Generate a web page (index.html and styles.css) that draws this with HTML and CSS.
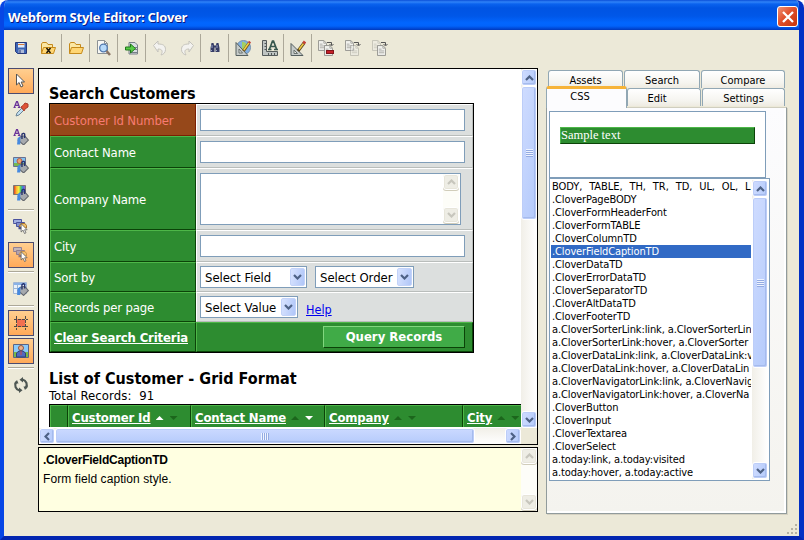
FILE: index.html
```html
<!DOCTYPE html>
<html lang="en">
<head>
<meta charset="utf-8">
<title>Webform Style Editor: Clover</title>
<link rel="stylesheet" href="styles.css">
</head>
<body>
<svg width="0" height="0" class="defs">
  <defs>
    <symbol id="up" viewBox="0 0 9 6"><path d="M1 5 4.5 1.5 8 5" fill="none" stroke="currentColor" stroke-width="2.2"/></symbol>
    <symbol id="down" viewBox="0 0 9 6"><path d="M1 1 4.5 4.5 8 1" fill="none" stroke="currentColor" stroke-width="2.2"/></symbol>
    <symbol id="left" viewBox="0 0 6 9"><path d="M5 1 1.5 4.5 5 8" fill="none" stroke="currentColor" stroke-width="2.2"/></symbol>
    <symbol id="right" viewBox="0 0 6 9"><path d="M1 1 4.5 4.5 1 8" fill="none" stroke="currentColor" stroke-width="2.2"/></symbol>
    <symbol id="folder" viewBox="0 0 16 16"><path d="M1.5 13.500V4l1-1.500h4L8 4.500h4.500V7" fill="#fbe7a4" stroke="#c58a1c"/><path d="M1.500 13.500 3.500 7.500h12l-2 6z" fill="#ffd674" stroke="#c58a1c" stroke-linejoin="round"/></symbol>
    <symbol id="cursor" viewBox="0 0 12 16"><path d="M1.500 1v11l2.600-2.500L6 14l2-1-1.900-4H9.500z" fill="#fff" stroke="#555" stroke-linejoin="round"/></symbol>
    <symbol id="page" viewBox="0 0 10 12"><path d="M.5.500h6l3 3v8h-9z" fill="#f1f1ed" stroke="#8d8d89"/><path d="M6.500.500v3h3M2 4.500h3M2 6.500h6M2 8.500h6" fill="none" stroke="#a7a7a3"/></symbol>
    <symbol id="bucket" viewBox="0 0 12 12"><path d="m4 4 4-1 3.500 4-4.500 4.500-5-4.500z" fill="#a6a9ad" stroke="#65686d"/><path d="M1 11 1.500 5l2.500-1.500V11z" fill="#4689df"/><path d="M5.500 6V1.500l1.500-1 1 1V5" fill="none" stroke="#27336e" stroke-width="1.300"/></symbol>
    <symbol id="letter" viewBox="0 0 9 8"><path d="M.5 7.500h2.500M5.500 7.500H8.500M1.500 7 4 .800h1L7.200 7M2.800 5h3.200" fill="none" stroke="#6a3399" stroke-width="1.500"/></symbol>
    <symbol id="stack" viewBox="0 0 16 16"><path d="M.5 3.500V.500h8v4h-8z" fill="#9faee0" stroke="#4a529d"/><path d="M3.500 3.500h8v4h-8z" fill="#8190cf" stroke="#4a529d"/><path d="M6.500 6.500 8 4.500h4l1.500 2V9h-7z" fill="#f3c064" stroke="#a67530"/><path d="M5.500 9h4" stroke="#444b8e" stroke-width="2.500"/></symbol>
  </defs>
</svg>
<div class="window">
  <header class="titlebar">
    <h1>Webform Style Editor: Clover</h1>
    <button class="close"><svg width="20" height="20" viewBox="0 0 20 20"><path d="m5 5 10 10M15 5 5 15" stroke="#fff" stroke-width="2.300"/></svg></button>
  </header>

  <nav class="toolbar">
    <span class="tool"><svg class="i" width="12" height="12" viewBox="0 0 12 12"><path d="M.5.500h11v11h-9l-2-2z" fill="#3c64b5" stroke="#26387b"/><path d="M3 1h6.500v4.500H3z" fill="#dfe9f7"/><path d="M3 2.500h6.500" stroke="#d77a3a"/><path d="M3.500 7.500h5.500V11H3.500z" fill="#aebbd7"/><path d="M5 8v3" stroke="#26387b"/></svg></span>
    <span class="tool"><svg width="16" height="16"><use href="#folder"/><path d="m6.500 8 4 5M10.500 8l-4 5" stroke="#1d1608" stroke-width="1.500"/></svg></span>
    <i class="sep"></i>
    <span class="tool"><svg width="16" height="16"><use href="#folder"/></svg></span>
    <i class="sep"></i>
    <span class="tool"><svg class="i" width="16" height="18" viewBox="0 0 16 18"><path d="M1.500 1.500h7l3 3v10h-10z" fill="#f8f8f4" stroke="#8d9295"/><path d="M8.500 1.500v3h3" fill="none" stroke="#8d9295"/><circle cx="7.500" cy="9" r="3.800" fill="#b7dafa" stroke="#5279ae" stroke-width="1.300"/><path d="m10.500 12 3.500 4" stroke="#8a7464" stroke-width="2.500"/></svg></span>
    <i class="sep"></i>
    <span class="tool"><svg width="16" height="16" viewBox="0 0 16 16"><path d="M5 2.500h6l2.500 2.500v9H5z" fill="#d9dde2" stroke="#788087"/><path d="M11 7.500h2M11 9.500h2M7 12.500h6" stroke="#788087"/><path d="M1.500 7h5V4l5 4.500-5 4.500v-3h-5z" fill="#59cc46" stroke="#21761c"/></svg></span>
    <i class="sep"></i>
    <span class="tool"><svg width="16" height="16" viewBox="0 0 16 16"><path id="undo" d="M1.500 5.500 6 1v3c5 0 7.500 1.500 7.500 5.500 0 3-2 5-4.500 5.500 2-3.500 1.500-6-3-6v3z" fill="#f3f2ef" stroke="#c5c3bc"/></svg></span>
    <span class="tool"><svg width="16" height="16" viewBox="0 0 16 16"><use href="#undo" transform="matrix(-1 0 0 1 16 0)"/></svg></span>
    <i class="sep"></i>
    <span class="tool"><svg class="i" width="10" height="11" viewBox="0 0 10 11"><path d="M1.500 1h2L4.500 5v5h-4V6zM6.500 1h2l1 5v4h-4V5z" fill="#363c66"/><path d="M4 4.500h2" stroke="#363c66" stroke-width="2"/><path d="M2 3v3M7 3v3M1.500 8v1M6.500 8v1" stroke="#99a4c9"/></svg></span>
    <i class="sep"></i>
    <span class="tool"><svg width="16" height="16" viewBox="0 0 16 16"><circle cx="8.500" cy="7.500" r="7" fill="#80afe3" stroke="#7590ac"/><path d="M7 1.500 11 3l1 6-5 2z" fill="#a2cf65"/><path d="M1 2.500V15.500h12z" fill="#c6cbc9" stroke="#555f5f"/><path d="M4 9v4h3.500z" fill="#e4e7e4" stroke="#68706e"/><path d="m8.500 11 5.500-8" stroke="#735420" stroke-width="3"/><path d="m8.800 10 5-7" stroke="#f1cf42" stroke-width="1.500"/><path d="m14 3 1-1.500" stroke="#c13b34" stroke-width="2.500"/></svg></span>
    <span class="tool"><svg width="16" height="16" viewBox="0 0 16 16"><path d="M.5.500h4v11h11v4H.500z" fill="#bfc4c2" stroke="#545a5a"/><path d="M2.500 3.500h2M2.500 6.500h2M2.500 9.500h2M6.500 13v2M9.500 13v2M12.500 13v2" stroke="#545a5a"/><path d="M6 9.500h3.500M12 9.500h4M7.500 9 10.500 1h1L14.500 9M8.500 6.500h4.500" fill="none" stroke="#38584e" stroke-width="1.700"/></svg></span>
    <i class="sep"></i>
    <span class="tool"><svg width="16" height="16" viewBox="0 0 16 16"><path d="M1 3.500v12h12z" fill="#c6cbc9" stroke="#555f5f"/><path d="M4 10v3.500h3.500z" fill="#eceae0" stroke="#68706e"/><path d="m8 11 6-8" stroke="#59451e" stroke-width="3"/><path d="m9 9.500 4.500-6" stroke="#edca45" stroke-width="1.500"/><path d="M13.500 3.500 15 1.500" stroke="#c54238" stroke-width="3"/></svg></span>
    <i class="sep"></i>
    <span class="tool"><svg width="16" height="16"><use href="#page" width="9" height="11"/><use href="#page" x="6" y="5" width="9" height="11"/><path d="M9 2.500h4.500V5M11.500 4l2 2 2-2" fill="none" stroke="#555"/><rect x="8.500" y="10.500" width="7" height="3" fill="#c51f27" stroke="#82151b"/></svg></span>
    <span class="tool"><svg width="16" height="16"><use href="#page" width="9" height="11"/><g opacity=".5"><use href="#page" x="5" y="5" width="9" height="11"/></g><path d="M9 2.500h4.500V5M11.500 4l2 2 2-2" fill="none" stroke="#555"/></svg></span>
    <span class="tool"><svg width="16" height="16"><g opacity=".45"><use href="#page" width="9" height="11"/></g><use href="#page" x="5" y="5" width="9" height="11"/><path d="M9 2.500h4.500V5M11.500 4l2 2 2-2" fill="none" stroke="#555"/></svg></span>
  </nav>

  <main class="content">
    <nav class="side">
      <span class="btn on"><svg width="12" height="16"><use href="#cursor"/></svg></span>
      <span class="btn"><svg width="16" height="16"><use href="#letter" width="8" height="7"/><path d="m3 15 1-3 5-5 2 2-5 5z" fill="#c3dff0" stroke="#6c8597"/><path d="m8 6 2-1.500 2-2.500 3 1v3l-3 2-1 2z" fill="#df5233" stroke="#a83c2b"/></svg></span>
      <span class="btn"><svg width="16" height="16"><use href="#letter" width="8" height="7"/><use href="#bucket" x="3" y="3.500" width="13" height="13"/></svg></span>
      <span class="btn"><svg width="16" height="16"><path d="M.5.500h12v9H.500z" fill="#7fc2f1" stroke="#6b7190"/><path d="M1 6h11v3H1z" fill="#78b84e"/><circle cx="6.500" cy="4" r="2.500" fill="#e9a473" stroke="#ba5944"/><use href="#bucket" x="3" y="3.500" width="13" height="13"/></svg></span>
      <span class="btn"><svg width="16" height="16"><path d="M.500.500h12v9H.500z" fill="url(#rainbow)" stroke="#777"/><linearGradient id="rainbow"><stop stop-color="#d32929"/><stop offset=".25" stop-color="#ffb72e"/><stop offset=".45" stop-color="#f4f54c"/><stop offset=".6" stop-color="#47ca64"/><stop offset=".8" stop-color="#3f76e6"/><stop offset="1" stop-color="#c34dc5"/></linearGradient><use href="#bucket" x="3" y="3.500" width="13" height="13"/></svg></span>
      <i class="rule"></i>
      <span class="btn"><svg width="16" height="16"><use href="#stack" width="16" height="16"/><use href="#cursor" x="7" y="3.500" width="9" height="13"/></svg></span>
      <span class="btn on"><svg width="16" height="16"><use href="#stack" width="16" height="16" opacity=".6"/><use href="#cursor" x="7" y="3.500" width="9" height="13"/></svg></span>
      <i class="rule"></i>
      <span class="btn"><svg width="16" height="16"><path d="M.500 1.500h13v11H.500z" fill="#e9f1fb" stroke="#a2b7d4"/><path d="M1 3h12" stroke="#8ab2e7" stroke-width="2"/><path d="M1 7.500h12M4.500 4v8" stroke="#9db8d7"/><use href="#bucket" x="3" y="2" width="13" height="13"/></svg></span>
      <i class="rule"></i>
      <span class="btn on"><svg width="14" height="14" viewBox="0 0 14 14"><path d="M3 3h8v8H3z" fill="#f36f50"/><path d="M0 3.500h14M0 10.500h14M2.500 0v14M11.500 0v14" stroke="#4d4a48" stroke-dasharray="3 1"/></svg></span>
      <span class="btn on"><svg width="16" height="14" viewBox="0 0 16 14"><path d="M.500.500h15v13H.500z" fill="#8acafa" stroke="#596586"/><path d="M1 8h14v5H1z" fill="#75b94b"/><circle cx="8" cy="4" r="2.500" fill="#ecb18b" stroke="#8c5643"/><path d="M3.500 13V9L6 7h4l2.500 2v4z" fill="#5268bd" stroke="#32417a"/><path d="M8 7v4" stroke="#cf4648"/></svg></span>
      <i class="rule"></i>
      <span class="btn"><svg width="16" height="16" viewBox="0 0 16 16"><path d="M9.500 2.500A5.500 5.500 0 0 1 12.800 11M6.500 13.500A5.500 5.500 0 0 1 3.200 5" fill="none" stroke="#4d5652" stroke-width="2.200"/><path d="M10 0v5.500L6.500 2.700zM6 16v-5.500l3.500 2.800zM10.500 9.500h4.500L12 13zM5.500 6.500H1L4 3z" fill="#4d5652"/></svg></span>
    </nav>

    <section class="center">
      <div class="preview">
        <div class="page">
          <h2>Search Customers</h2>
          <div class="form">
            <div class="row"><div class="cap picked">Customer Id Number</div><div class="val"><span class="input"></span></div></div>
            <div class="row"><div class="cap">Contact Name</div><div class="val"><span class="input"></span></div></div>
            <div class="row tall"><div class="cap">Company Name</div><div class="val"><div class="textarea"><div class="vbar off"><b><svg width="9" height="6"><use href="#up"/></svg></b><b class="end"><svg width="9" height="6"><use href="#down"/></svg></b></div></div></div></div>
            <div class="row"><div class="cap">City</div><div class="val"><span class="input"></span></div></div>
            <div class="row short"><div class="cap">Sort by</div><div class="val"><span class="select field">Select Field<b><svg width="9" height="6"><use href="#down"/></svg></b></span><span class="select order">Select Order<b><svg width="9" height="6"><use href="#down"/></svg></b></span></div></div>
            <div class="row short"><div class="cap">Records per page</div><div class="val"><span class="select value">Select Value<b><svg width="9" height="6"><use href="#down"/></svg></b></span><a class="help">Help</a></div></div>
            <div class="row short"><div class="cap"><a class="clear">Clear Search Criteria</a></div><div class="val foot"><span class="query">Query Records</span></div></div>
          </div>
          <h2 class="list-title">List of Customer - Grid Format</h2>
          <div class="total">Total Records:&nbsp; 91</div>
          <div class="grid">
            <div class="th g0"></div>
            <div class="th g1"><a>Customer Id</a><i class="asc lit"></i><i class="desc"></i></div>
            <div class="th g2"><a>Contact Name</a><i class="asc"></i><i class="desc lit"></i></div>
            <div class="th g3"><a>Company</a><i class="asc"></i><i class="desc"></i></div>
            <div class="th g4"><a>City</a><i class="asc"></i><i class="desc"></i></div>
          </div>
        </div>
        <div class="vbar"><b><svg width="9" height="6"><use href="#up"/></svg></b><em class="t1"><i class="grip"></i></em><b class="end"><svg width="9" height="6"><use href="#down"/></svg></b></div>
        <div class="hbar"><b><svg width="6" height="9"><use href="#left"/></svg></b><em><i class="grip"></i></em><b class="end"><svg width="6" height="9"><use href="#right"/></svg></b></div>
        <div class="corner"></div>
      </div>
      <div class="info">
        <div class="info-text"><strong>.CloverFieldCaptionTD</strong><p>Form field caption style.</p></div>
        <div class="vbar off"><b><svg width="9" height="6"><use href="#up"/></svg></b><b class="end"><svg width="9" height="6"><use href="#down"/></svg></b></div>
      </div>
    </section>

    <aside class="panel">
      <div class="tabs back"><span class="tab w1">Assets</span><span class="tab w2">Search</span><span class="tab w3">Compare</span></div>
      <div class="tabs front"><span class="tab current">CSS</span><span class="tab w4">Edit</span><span class="tab w5">Settings</span></div>
      <div class="sheet">
        <div class="sample"><div>Sample text</div></div>
        <div class="listbox">
          <ul>
            <li class="wide">BODY, TABLE, TH, TR, TD, UL, OL, LI</li>
            <li>.CloverPageBODY</li>
            <li>.CloverFormHeaderFont</li>
            <li>.CloverFormTABLE</li>
            <li>.CloverColumnTD</li>
            <li class="sel">.CloverFieldCaptionTD</li>
            <li>.CloverDataTD</li>
            <li>.CloverErrorDataTD</li>
            <li>.CloverSeparatorTD</li>
            <li>.CloverAltDataTD</li>
            <li>.CloverFooterTD</li>
            <li>a.CloverSorterLink:link, a.CloverSorterLin</li>
            <li>a.CloverSorterLink:hover, a.CloverSorter</li>
            <li>a.CloverDataLink:link, a.CloverDataLink:v</li>
            <li>a.CloverDataLink:hover, a.CloverDataLin</li>
            <li>a.CloverNavigatorLink:link, a.CloverNavig</li>
            <li>a.CloverNavigatorLink:hover, a.CloverNa</li>
            <li>.CloverButton</li>
            <li>.CloverInput</li>
            <li>.CloverTextarea</li>
            <li>.CloverSelect</li>
            <li>a.today:link, a.today:visited</li>
            <li>a.today:hover, a.today:active</li>
          </ul>
          <div class="vbar"><b><svg width="9" height="6"><use href="#up"/></svg></b><em class="t2"><i class="grip"></i></em><b class="end"><svg width="9" height="6"><use href="#down"/></svg></b></div>
        </div>
      </div>
    </aside>
  </main>
  <svg class="resize" width="12" height="12"><path d="M8 0h2v2H8zM4 4h2v2H4zM8 4h2v2H8zM0 8h2v2H0zM4 8h2v2H4zM8 8h2v2H8z" fill="#b5b2a3"/></svg>
</div>
</body>
</html>
```
FILE: styles.css
```css
* { box-sizing: border-box; }
body { margin: 0; width: 804px; height: 540px; overflow: hidden; background: #fff; font-family: "DejaVu Sans Condensed", "DejaVu Sans", sans-serif; font-stretch: condensed; font-size: 13px; color: #000; }
h1, h2, p, ul { margin: 0; padding: 0; }
svg { display: block; flex: none; }
.defs { position: absolute; }

.window { position: relative; width: 804px; height: 540px; display: flex; flex-direction: column; background: #ece9d8; border: solid #0646e5; border-width: 0 5px 4px 4px; border-right-color: #0230c4; border-bottom-color: #0225b0; border-radius: 8px 8px 0 0; overflow: hidden; }
.window::after { content: ""; position: absolute; inset: auto -5px -4px -4px; height: 2px; background: #001590; }
.titlebar { height: 30px; flex: none; margin: 0 -5px 0 -4px; padding: 5px 6px 0 8px; display: flex; justify-content: space-between; background: linear-gradient(#0a4fd8 0, #2f83f8 2px, #0a62ee 4px, #0054e3 8px, #0057e8 16px, #0266ff 23px, #0263fb 26px, #0043cf 29px, #0238b8 30px); }
h1 { font: bold 13px/24px "Open Sans", sans-serif; color: #fff; letter-spacing: -.25px; text-shadow: 1px 1px #0a1883; white-space: nowrap; }
.close { width: 21px; height: 21px; margin-top: 1px; padding: 0; border: 1px solid #fff; border-radius: 3px; background: linear-gradient(135deg, #f09275, #e0502c 45%, #c73408); }

.toolbar { height: 38px; flex: none; display: flex; padding: 4px 0 6px 3px; }
.tool { width: 27px; height: 27px; flex: none; display: flex; align-items: center; justify-content: center; }
.sep { width: 1px; height: 28px; flex: none; background: #aca899; }
.content { display: flex; height: 446px; }
.side { width: 34px; padding-left: 4px; display: flex; flex-direction: column; gap: 2px; flex: none; }
.btn { width: 26px; height: 26px; display: flex; align-items: center; justify-content: center; flex: none; }
.on { border: 1px solid #4b4b6f; background: linear-gradient(#ffcf90, #ffaa59); }
.rule { width: 26px; height: 4px; flex: none; border-top: 1px solid transparent; border-bottom: 1px solid transparent; background: linear-gradient(#aca899 50%, #fff 50%) padding-box; }

.center { width: 500px; flex: none; }
.preview { width: 500px; height: 377px; border: 1px solid #000; background: #fff; display: grid; grid-template: 359px 16px / 482px 16px; }
.page { overflow: hidden; padding: 16px 0 0 10px; height: 358px; }
h2 { font-size: 16px; line-height: 18px; letter-spacing: -.05px; font-weight: bold; white-space: nowrap; }
.form { width: 425px; height: 250px; border: 1px solid #000; }
.row { display: grid; grid-template-columns: 146px 277px; height: 32px; }
.tall { height: 62px; }
.short { height: 30px; }
.cap { background: #2d8c30; border: 1px solid; border-color: #4db748 #0b4308 #0b4308 #4db748; color: #fff; padding-left: 3px; display: flex; align-items: center; white-space: nowrap; letter-spacing: -.15px; }
.picked { background: #96481a; border-color: #a35116 #7a1f03 #7a1f03 #a35116; color: #f87b72; }
.val { background: #dcdfde; border: 1px solid; border-color: #fff #b9bdbb #b9bdbb #fff; padding-left: 3px; display: flex; align-items: center; }
.input { width: 265px; height: 22px; background: #fff; border: 1px solid #7f9db9; }
.textarea { width: 261px; height: 52px; background: #fff; border: 1px solid #7f9db9; display: flex; justify-content: flex-end; padding-right: 1px; }
.select { height: 22px; background: #fff; border: 1px solid #7f9db9; padding: 1px 1px 1px 4px; display: flex; justify-content: space-between; line-height: 19px; white-space: nowrap; margin-top: -1px; letter-spacing: -.05px; }
.select b { width: 15px; height: 18px; color: #4d6185; background: linear-gradient(100deg, #d8e3ff, #b0c6f8); border: 1px solid #c3d3f9; border-radius: 2px; display: flex; align-items: center; justify-content: center; }
.field { width: 107px; }
.order { width: 99px; margin-left: 8px; }
.value { width: 98px; }
.help { margin: 5px 0 0 8px; color: #00e; text-decoration: underline; font-size: 12.500px; }
.clear { font-weight: bold; text-decoration: underline; }
.foot { background: #2d8c30; border-color: #4db748 #0b4308 #0b4308 #4db748; justify-content: flex-end; padding-right: 7px; }
.query { width: 142px; height: 22px; margin-top: -1px; background: #40ab47; border: 1px solid; border-color: #81d77e #0b4308 #0b4308 #81d77e; color: #fff; font-weight: bold; text-align: center; line-height: 20px; }
.list-title { margin-top: 17px; letter-spacing: .03px; }
.total { height: 16px; line-height: 16px; letter-spacing: .1px; white-space: pre; }
.grid { display: flex; border-top: 1px solid #000; border-left: 1px solid #000; width: 600px; height: 30px; }
.th { height: 30px; flex: none; background: #2d8c30; border: 1px solid; border-color: #4db748 #0b4308 #0b4308 #4db748; padding: 3px 0 0 3px; display: flex; color: #fff; font-weight: bold; line-height: 18px; white-space: nowrap; letter-spacing: -.15px; }
.th a { text-decoration: underline; }
.g0 { width: 18px; } .g1 { width: 123px; } .g2 { width: 134px; } .g3 { width: 138px; } .g4 { width: 120px; }
.asc, .desc { width: 8px; height: 4px; margin: 7px 0 0 5px; background: #1c661c; clip-path: polygon(50% 0, 100% 100%, 0 100%); }
.desc { margin-left: 6px; clip-path: polygon(0 0, 100% 0, 50% 100%); }
.lit { background: #fff; }

.vbar, .hbar { background: linear-gradient(90deg, #f1efe8, #fff); display: flex; flex: none; }
.vbar { width: 16px; flex-direction: column; }
.hbar { height: 16px; background: linear-gradient(#f1efe8, #fff); }
.vbar b, .hbar b, .vbar em, .hbar em { display: flex; align-items: center; justify-content: center; flex: none; border: 1px solid #fff; border-radius: 3px; background: linear-gradient(100deg, #cfdcff, #b4cafb); box-shadow: inset 0 0 0 1px #bccdf8, inset -1px -1px 0 1px #a5bbed; color: #4d6185; }
.vbar b { width: 16px; height: 17px; }
.hbar b { width: 16px; height: 16px; }
.hbar em { width: 420px; height: 16px; background: linear-gradient(#cbd9ff, #b6cbfb); }
.vbar em { width: 16px; }
.vbar .t1 { height: 134px; }
.vbar .t2 { height: 171px; }
.vbar .end { margin-top: auto; }
.hbar .end { margin-left: auto; }
.vbar .grip { width: 7px; height: 8px; background: repeating-linear-gradient(#eef3ff 0 1px, #94abe2 1px 2px); }
.hbar .grip { width: 8px; height: 7px; background: repeating-linear-gradient(90deg, #eef3ff 0 1px, #94abe2 1px 2px); }
.vbar.off { background: #fdfdf8; }
.off b { background: #eeede5; color: #c7c6bd; box-shadow: inset 0 0 0 1px #e7e5da, 0 1px #d1cdba; height: 16px; }
.off .end { margin-bottom: 1px; }
.textarea .vbar { height: 50px; }
.corner { background: #ece9d8; }
.info { width: 500px; height: 65px; margin-top: 2px; border: 1px solid #000; background: #ffffe1; display: flex; justify-content: space-between; }
.info-text { font: 12px/19px "Liberation Sans", sans-serif; padding: 3px 0 0 4px; letter-spacing: .08px; }
.info-text strong { letter-spacing: -.22px; }

.panel { width: 242px; margin-left: 8px; padding-top: 2px; flex: none; }
.tabs { display: flex; height: 18px; gap: 1px; font: 11px/19px "DejaVu Sans Condensed", "DejaVu Sans", sans-serif; }
.back { padding-left: 2px; }
.tab { height: 18px; border: 1px solid #91a7b4; border-bottom: 0; border-radius: 3px 3px 0 0; background: linear-gradient(#fff, #f5f4ef 70%, #eeebe1); text-align: center; }
.front { height: 19px; gap: 0; position: relative; }
.front .tab { height: 18px; }
.front .current { width: 81px; height: 22px; margin-top: -2px; line-height: 16px; padding-right: 13px; border-top: 3px solid #f6b338; background: #fcfcfe; }
.w1 { width: 75px; } .w2 { width: 76px; } .w3 { width: 84px; }
.w4 { width: 74px; padding-right: 14px; } .w5 { width: 83px; margin-left: 1px; }
.sheet { width: 241px; height: 407px; border: 1px solid #919b9c; background: linear-gradient(#fcfcfe, #f4f3ee); padding: 3px 0 0 2px; box-shadow: 1px 1px #d6d2c2, inset -2px -2px #fff; }
.sheet { border-top-color: #d0cebf; }
.sample { width: 217px; height: 67px; border: 1px solid #7f9db9; background: #fff; padding: 15px 10px 0; }
.sample div { width: 195px; height: 17px; background: #2d8c30; border: 1px solid; border-color: #4db748 #0b4308 #0b4308 #4db748; color: #fff; font: 12.500px/15px "Liberation Serif", serif; }
.listbox { width: 221px; height: 303px; border: 1px solid #7f9db9; background: #fff; display: flex; justify-content: space-between; padding: 1px; }
ul { width: 200px; overflow: hidden; list-style: none; font-size: 11px; line-height: 13px; letter-spacing: -.12px; }
li { height: 13px; padding-left: 1px; white-space: nowrap; }
.wide { word-spacing: 3.800px; letter-spacing: -.05px; }
.sel { background: #316ac5; color: #fff; }
.resize { position: absolute; right: 0; bottom: 0; }
```
